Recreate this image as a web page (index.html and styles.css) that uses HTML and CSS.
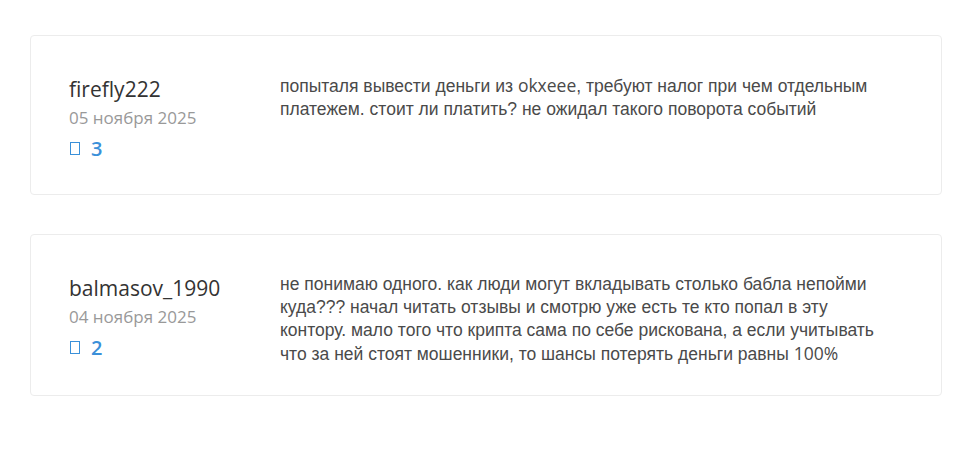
FILE: index.html
```html
<!DOCTYPE html>
<html lang="ru">
<head>
    <meta charset="UTF-8">
    <meta name="viewport" content="width=device-width, initial-scale=1.0">
    <title>Отзывы</title>
    <link rel="stylesheet" href="styles.css">
</head>
<body>
    <div class="reviews">
        <div class="review">
            <div class="review-author">
                <div class="author-name">firefly222</div>
                <div class="review-date">05 ноября 2025</div>
                <div class="review-likes"><span class="icon-box"></span>3</div>
            </div>
            <div class="review-text">попыталя вывести деньги из <span class="lat">okxeee</span>, требуют налог при чем отдельным платежем. стоит ли платить? не ожидал такого поворота событий</div>
        </div>

        <div class="review">
            <div class="review-author">
                <div class="author-name">balmasov_1990</div>
                <div class="review-date">04 ноября 2025</div>
                <div class="review-likes"><span class="icon-box"></span>2</div>
            </div>
            <div class="review-text">не понимаю одного. как люди могут вкладывать столько бабла непойми куда??? начал читать отзывы и смотрю уже есть те кто попал в эту контору. мало того что крипта сама по себе рискована, а если учитывать что за ней стоят мошенники, то шансы потерять деньги равны <span class="lat">100%</span></div>
        </div>
    </div>
</body>
</html>
```

FILE: styles.css
```css
body {
    margin: 0;
    background: #fff;
    font-family: "Open Sans", Arial, sans-serif;
}
.reviews {
    width: 912px;
    margin: 35px 0 0 30px;
    display: flex;
    flex-direction: column;
    gap: 39px;
}
.review {
    display: flex;
    border: 1px solid #ececec;
    border-radius: 4px;
    padding: 41px 38px 29px;
    min-height: 88px;
}
.review-author {
    width: 211px;
    flex-shrink: 0;
}
.author-name {
    font-size: 21px;
    line-height: 24px;
    color: #333;
}
.review-date {
    margin-top: 5px;
    font-size: 17px;
    line-height: 24px;
    color: #999;
}
.review-likes {
    margin-top: 7px;
    display: flex;
    align-items: center;
    font-size: 20px;
    line-height: 24px;
    font-weight: 600;
    color: #3a90d9;
}
.icon-box {
    width: 8px;
    height: 11px;
    border: 1px solid #3a90d9;
    margin: 0 11px 2px 1px;
}
.review-text {
    width: 610px;
    margin-top: -3px;
    font-family: "Liberation Sans", Arial, sans-serif;
    font-size: 17.5px;
    line-height: 23px;
    color: #4a4a4a;
}
.lat {
    font-family: "Open Sans", sans-serif;
}
```
